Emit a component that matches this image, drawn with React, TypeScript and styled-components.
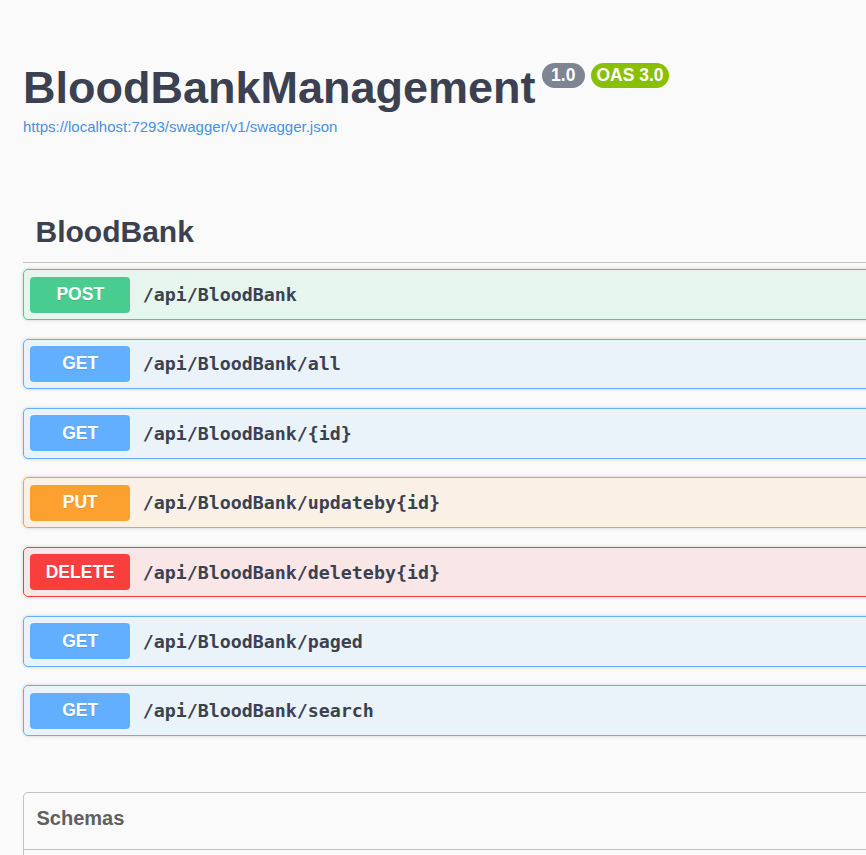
import React from "react";
import styled, { createGlobalStyle } from "styled-components";

const Global = createGlobalStyle`
  html, body {
    margin: 0;
    padding: 0;
    background: #fafafa;
    overflow: hidden;
  }
  body {
    font-family: "Liberation Sans", Arial, sans-serif;
    color: #3b4151;
  }
`;

type Method = "POST" | "GET" | "PUT" | "DELETE";

const palette: Record<Method, { main: string; bg: string }> = {
  POST: { main: "#49cc90", bg: "rgba(73,204,144,.1)" },
  GET: { main: "#61affe", bg: "rgba(97,175,254,.1)" },
  PUT: { main: "#fca130", bg: "rgba(252,161,48,.1)" },
  DELETE: { main: "#f93e3e", bg: "rgba(249,62,62,.1)" },
};

const Wrapper = styled.div`
  width: 1300px;
  padding: 0 0 0 23px;
  box-sizing: border-box;
`;

const Info = styled.div`
  padding-top: 62px;
  margin-bottom: 67.75px;
`;

const TitleRow = styled.div`
  display: flex;
  align-items: flex-start;
  gap: 6px;
`;

const Title = styled.h2`
  margin: 0 0 0 0;
  font-size: 45px;
  line-height: 52px;
  font-weight: 700;
  color: #3b4151;
`;

const Stamp = styled.span<{ $bg: string; $pad: number }>`
  display: inline-block;
  margin-top: 1px;
  height: 25px;
  line-height: 25px;
  padding: 0 ${(p) => p.$pad}px;
  border-radius: 13px;
  background: ${(p) => p.$bg};
  color: #fff;
  font-size: 17.5px;
  font-weight: 700;
  font-family: "Liberation Sans", Arial, sans-serif;
`;

const SpecLink = styled.a`
  display: block;
  margin-top: 3.5px;
  font-size: 15px;
  line-height: 17.25px;
  color: #4990e2;
  text-decoration: none;
`;

const TagHeading = styled.h3`
  display: flex;
  align-items: center;
  margin: 0 0 6.25px;
  padding: 12.5px 25px 12.5px 12.5px;
  font-size: 30px;
  line-height: 34.5px;
  font-weight: 700;
  color: #3b4151;
  border-bottom: 1px solid rgba(59, 65, 81, 0.3);
`;

const OpList = styled.div`
  display: flex;
  flex-direction: column;
  gap: 18.6px;
`;

const OpBlock = styled.div<{ $method: Method }>`
  display: flex;
  align-items: center;
  padding: 6.25px;
  border: 1px solid ${(p) => palette[p.$method].main};
  border-radius: 5px;
  background: ${(p) => palette[p.$method].bg};
  box-shadow: 0 0 3.75px rgba(0, 0, 0, 0.19);
`;

const MethodBadge = styled.span<{ $method: Method }>`
  display: flex;
  align-items: center;
  justify-content: center;
  width: 100px;
  height: 36.25px;
  flex-shrink: 0;
  border-radius: 3.75px;
  background: ${(p) => palette[p.$method].main};
  color: #fff;
  font-size: 17.5px;
  font-weight: 700;
  text-shadow: 0 1px 0 rgba(0, 0, 0, 0.1);
`;

const OpPath = styled.span`
  padding: 0 12.5px;
  font-family: "DejaVu Sans Mono", "Liberation Mono", monospace;
  font-size: 18.3px;
  font-weight: 700;
  color: #3b4151;
`;

const Models = styled.section`
  margin-top: 56px;
  border: 1px solid rgba(59, 65, 81, 0.3);
  border-radius: 5px;
  height: 200px;
`;

const ModelsHeading = styled.h4`
  display: flex;
  align-items: flex-start;
  box-sizing: border-box;
  height: 57px;
  margin: 0;
  padding: 13.5px 25px 0 12.5px;
  font-size: 20px;
  line-height: 23px;
  font-weight: 700;
  color: #606060;
  border-bottom: 1px solid rgba(59, 65, 81, 0.3);
`;

const ops: { method: Method; path: string }[] = [
  { method: "POST", path: "/api/BloodBank" },
  { method: "GET", path: "/api/BloodBank/all" },
  { method: "GET", path: "/api/BloodBank/{id}" },
  { method: "PUT", path: "/api/BloodBank/updateby{id}" },
  { method: "DELETE", path: "/api/BloodBank/deleteby{id}" },
  { method: "GET", path: "/api/BloodBank/paged" },
  { method: "GET", path: "/api/BloodBank/search" },
];

export default function App() {
  return (
    <>
      <Global />
      <Wrapper>
        <Info>
          <TitleRow>
            <Title>BloodBankManagement</Title>
            <Stamp $bg="#7d8492" $pad={9.5}>1.0</Stamp>
            <Stamp $bg="#89bf04" $pad={5.5}>OAS 3.0</Stamp>
          </TitleRow>
          <SpecLink href="#">https://localhost:7293/swagger/v1/swagger.json</SpecLink>
        </Info>
        <TagHeading>BloodBank</TagHeading>
        <OpList>
          {ops.map((op, i) => (
            <OpBlock key={i} $method={op.method}>
              <MethodBadge $method={op.method}>{op.method}</MethodBadge>
              <OpPath>{op.path}</OpPath>
            </OpBlock>
          ))}
        </OpList>
        <Models>
          <ModelsHeading>Schemas</ModelsHeading>
        </Models>
      </Wrapper>
    </>
  );
}
